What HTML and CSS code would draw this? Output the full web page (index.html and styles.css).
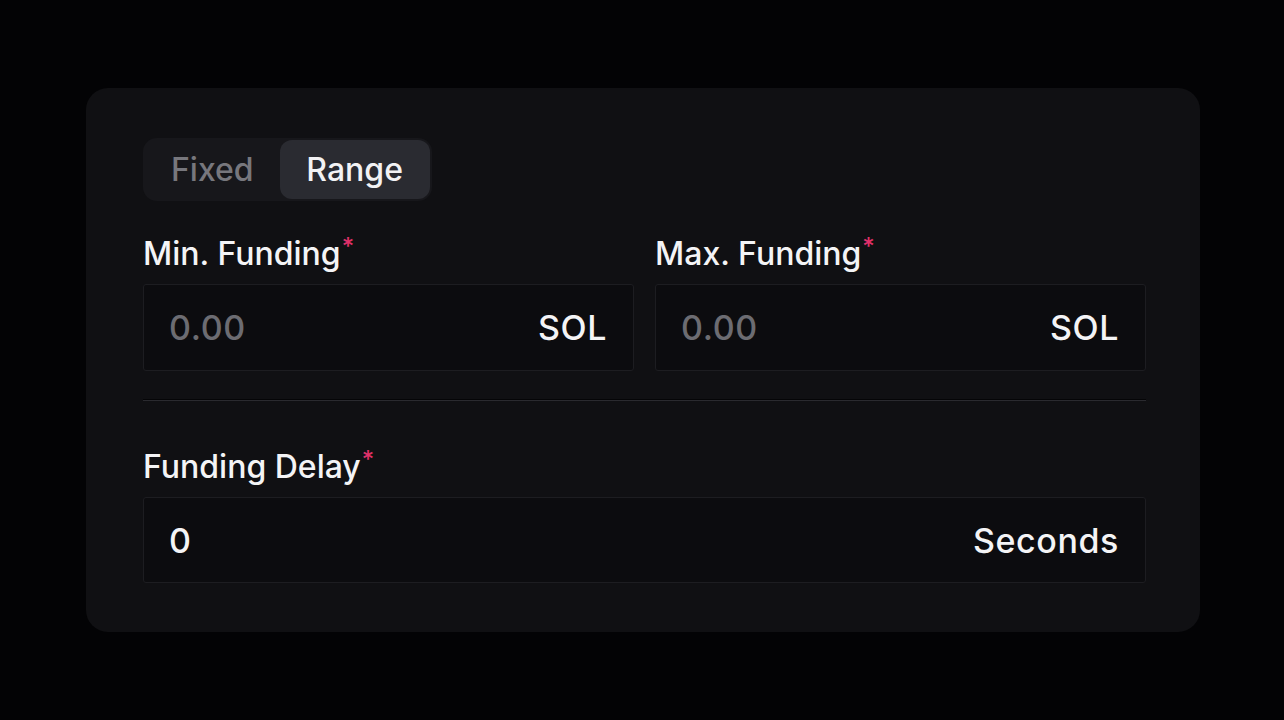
FILE: index.html
```html
<!DOCTYPE html>
<html>
<head>
<meta charset="utf-8">
<link rel="stylesheet" href="styles.css">
</head>
<body>
<div class="card">
  <div class="segmented">
    <span class="seg">Fixed</span>
    <span class="seg active">Range</span>
  </div>
  <div class="row">
    <div class="field">
      <div class="label">Min. Funding<span class="req">*</span></div>
      <div class="input"><span class="ph">0.00</span><span class="unit">SOL</span></div>
    </div>
    <div class="field">
      <div class="label">Max. Funding<span class="req">*</span></div>
      <div class="input"><span class="ph">0.00</span><span class="unit">SOL</span></div>
    </div>
  </div>
  <div class="divider"></div>
  <div class="field delay">
    <div class="label">Funding Delay<span class="req">*</span></div>
    <div class="input"><span class="val">0</span><span class="unit">Seconds</span></div>
  </div>
</div>
</body>
</html>
```

FILE: styles.css
```css
html, body {
  margin: 0;
  padding: 0;
  background: #030305;
  width: 1284px;
  height: 720px;
  overflow: hidden;
  font-family: Inter, "Liberation Sans", sans-serif;
}
body {
  padding-top: 88px;
  padding-left: 86px;
  box-sizing: border-box;
}
.card {
  width: 1114px;
  height: 544px;
  box-sizing: border-box;
  background: #101013;
  border-radius: 22px;
  padding: 50px 54px 0 57px;
  display: flex;
  flex-direction: column;
}
.segmented {
  display: flex;
  align-self: flex-start;
  background: #17171b;
  border-radius: 14px;
  padding: 2px;
  height: 63px;
  box-sizing: border-box;
}
.seg {
  display: flex;
  align-items: center;
  justify-content: center;
  font-size: 32px;
  font-weight: 500;
  color: #77777d;
  padding: 0 26px 0 26px;
  height: 59px;
}
.seg.active {
  background: #2a2b31;
  color: #f2f2f4;
  border-radius: 12px;
  width: 150px;
  padding: 0;
  box-sizing: border-box;
}
.row {
  display: flex;
  gap: 21px;
  margin-top: 34px;
}
.field {
  flex: 1;
  display: flex;
  flex-direction: column;
}
.label {
  font-size: 32px;
  font-weight: 500;
  color: #f4f4f6;
  letter-spacing: 0;
  line-height: 38px;
  height: 38px;
}
.req {
  color: #e0306a;
  font-size: 24px;
  vertical-align: top;
  line-height: 24px;
  margin-left: 1px;
}
.input {
  margin-top: 11px;
  height: 87px;
  box-sizing: border-box;
  border: 1px solid #1d1d21;
  background: #0c0c0f;
  border-radius: 3px;
  display: flex;
  align-items: center;
  justify-content: space-between;
  padding: 0 26px 0 25px;
  font-size: 34px;
  font-weight: 500;
  letter-spacing: 0.6px;
}
.ph { color: #6c6c72; }
.val, .unit { color: #f4f4f6; }
.divider {
  height: 1px;
  background: #2a2a2f;
  margin-top: 28px;
  border-top: 1px solid #050507;
}
.delay {
  margin-top: 47px;
  flex: none;
}
.delay .input {
  height: 86px;
}
```
